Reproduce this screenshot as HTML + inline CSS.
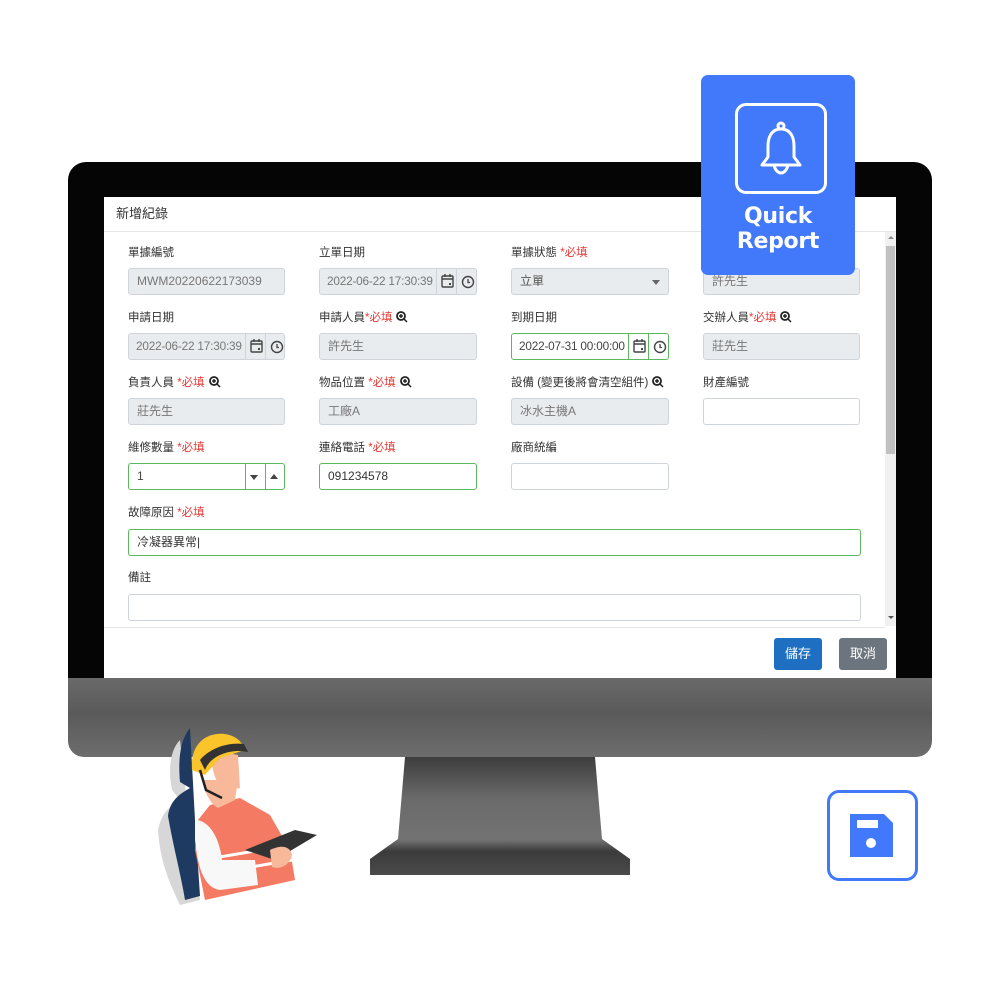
<!DOCTYPE html>
<html><head><meta charset="utf-8"><style>
*{box-sizing:border-box;margin:0;padding:0}
body{width:1000px;height:1000px;background:#fff;position:relative;overflow:hidden;font-family:"Liberation Sans","Noto Sans CJK TC",sans-serif;}
.a{position:absolute}
.lbl{position:absolute;font-size:11.5px;color:#333;white-space:nowrap;line-height:14px}
.req{color:#e53935}
.in{position:absolute;height:27px;border:1px solid #ced4da;border-radius:3px;background:#fff;font-size:12px;color:#444;padding-left:8px;line-height:25px;white-space:nowrap;overflow:hidden}
.sm{font-size:11.8px;padding-left:7px;letter-spacing:-0.2px}
.dis{background:#e9ecef;color:#777}
.ok{border-color:#5cb85c}
.addon{position:absolute;top:-1px;height:27px;width:21px;border-left:1px solid #ced4da}
.mag{display:inline-block;vertical-align:-2px;margin-left:4px}
</style></head><body>

<div class="a" style="left:68px;top:162px;width:864px;height:540px;background:#050505;border-radius:18px 18px 0 0"></div>
<div class="a" style="left:68px;top:678px;width:864px;height:79px;background:linear-gradient(#6a6a6a,#5a5a5a 45%,#6d6d6d);border-radius:0 0 16px 16px"></div>
<svg class="a" style="left:360px;top:757px" width="280" height="125">
<defs><linearGradient id="g" x1="0" y1="0" x2="0" y2="1"><stop offset="0" stop-color="#3d3d3d"/><stop offset=".35" stop-color="#6a6a6a"/><stop offset=".7" stop-color="#737373"/><stop offset=".8" stop-color="#3b3b3b"/><stop offset="1" stop-color="#4a4a4a"/></linearGradient></defs>
<path d="M45 0 H235 L242 82 L270 102 V118 H10 V102 L38 82 Z" fill="url(#g)"/>
</svg>

<div class="a" style="left:104px;top:197px;width:792px;height:481px;background:#fff"></div>
<div class="a" style="left:116px;top:203px;font-size:13px;color:#333">新增紀錄</div>
<div class="a" style="left:104px;top:231px;width:792px;height:1px;background:#e5e5e5"></div>
<div class="a" style="left:885px;top:232px;width:11px;height:394px;background:#f1f1f1"></div>
<div class="a" style="left:886px;top:246px;width:9px;height:208px;background:#c1c1c1"></div>
<div class="a" style="left:888px;top:236px;width:0;height:0;border:3px solid transparent;border-bottom-color:#888;border-top:0"></div>
<div class="a" style="left:888px;top:616px;width:0;height:0;border:3px solid transparent;border-top-color:#555;border-bottom:0"></div>
<div class="a" style="left:104px;top:627px;width:781px;height:1px;background:#e5e5e5"></div>

<div class="lbl" style="left:128px;top:246px">單據編號</div>
<div class="in dis" style="left:128px;top:268px;width:157px">MWM20220622173039</div>
<div class="lbl" style="left:319px;top:246px">立單日期</div>
<div class="in dis sm" style="left:319px;top:268px;width:158px">2022-06-22 17:30:39<div class="addon" style="left:116px"></div><div class="addon" style="left:136px"></div></div>
<div class="lbl" style="left:511px;top:246px">單據狀態 <span class="req">*必填</span></div>
<div class="in dis" style="left:511px;top:268px;width:158px;color:#555">立單<span class="a" style="right:8px;top:11px;border:4px solid transparent;border-top:5px solid #666;border-bottom:0"></span></div>
<div class="in dis" style="left:703px;top:268px;width:157px">許先生</div>

<div class="lbl" style="left:128px;top:311px">申請日期</div>
<div class="in dis sm" style="left:128px;top:333px;width:157px">2022-06-22 17:30:39<div class="addon" style="left:116px"></div><div class="addon" style="left:136px"></div></div>
<div class="lbl" style="left:319px;top:311px">申請人員<span class="req">*必填</span><svg class="mag" width="12" height="12"><circle cx="5" cy="5" r="4" fill="none" stroke="#222" stroke-width="1.8"/><path d="M8 8l3 3M3 5h4M5 3v4" stroke="#222" stroke-width="1.5"/></svg></div>
<div class="in dis" style="left:319px;top:333px;width:158px">許先生</div>
<div class="lbl" style="left:511px;top:311px">到期日期</div>
<div class="in ok sm" style="left:511px;top:333px;width:158px">2022-07-31 00:00:00<div class="addon" style="left:116px;border-color:#5cb85c"></div><div class="addon" style="left:136px;border-color:#5cb85c"></div></div>
<div class="lbl" style="left:703px;top:311px">交辦人員<span class="req">*必填</span><svg class="mag" width="12" height="12"><circle cx="5" cy="5" r="4" fill="none" stroke="#222" stroke-width="1.8"/><path d="M8 8l3 3M3 5h4M5 3v4" stroke="#222" stroke-width="1.5"/></svg></div>
<div class="in dis" style="left:703px;top:333px;width:157px">莊先生</div>

<div class="lbl" style="left:128px;top:376px">負責人員 <span class="req">*必填</span><svg class="mag" width="12" height="12"><circle cx="5" cy="5" r="4" fill="none" stroke="#222" stroke-width="1.8"/><path d="M8 8l3 3M3 5h4M5 3v4" stroke="#222" stroke-width="1.5"/></svg></div>
<div class="in dis" style="left:128px;top:398px;width:157px">莊先生</div>
<div class="lbl" style="left:319px;top:376px">物品位置 <span class="req">*必填</span><svg class="mag" width="12" height="12"><circle cx="5" cy="5" r="4" fill="none" stroke="#222" stroke-width="1.8"/><path d="M8 8l3 3M3 5h4M5 3v4" stroke="#222" stroke-width="1.5"/></svg></div>
<div class="in dis" style="left:319px;top:398px;width:158px">工廠A</div>
<div class="lbl" style="left:511px;top:376px">設備 (變更後將會清空組件)<svg class="mag" width="12" height="12"><circle cx="5" cy="5" r="4" fill="none" stroke="#222" stroke-width="1.8"/><path d="M8 8l3 3M3 5h4M5 3v4" stroke="#222" stroke-width="1.5"/></svg></div>
<div class="in dis" style="left:511px;top:398px;width:158px">冰水主機A</div>
<div class="lbl" style="left:703px;top:376px">財產編號</div>
<div class="in" style="left:703px;top:398px;width:157px"></div>

<div class="lbl" style="left:128px;top:441px">維修數量 <span class="req">*必填</span></div>
<div class="in ok" style="left:128px;top:463px;width:157px">1<div class="addon" style="left:116px;border-color:#5cb85c"></div><div class="addon" style="left:136px;border-color:#5cb85c"></div>
<span class="a" style="left:121px;top:11px;border:4px solid transparent;border-top:5px solid #444;border-bottom:0"></span>
<span class="a" style="left:141px;top:10px;border:4px solid transparent;border-bottom:5px solid #444;border-top:0"></span></div>
<div class="lbl" style="left:319px;top:441px">連絡電話 <span class="req">*必填</span></div>
<div class="in ok" style="left:319px;top:463px;width:158px;color:#333">091234578</div>
<div class="lbl" style="left:511px;top:441px">廠商統編</div>
<div class="in" style="left:511px;top:463px;width:158px"></div>

<div class="lbl" style="left:128px;top:506px">故障原因 <span class="req">*必填</span></div>
<div class="in ok" style="left:128px;top:529px;width:733px;color:#333">冷凝器異常|</div>
<div class="lbl" style="left:128px;top:571px">備註</div>
<div class="in" style="left:128px;top:594px;width:733px"></div>

<svg class="a" style="left:440px;top:274px" width="35" height="16"><rect x="2" y="2" width="11" height="11" rx="1" fill="none" stroke="#444" stroke-width="1.4"/><path d="M2 5h11M5 0v3M10 0v3" stroke="#444" stroke-width="1.4"/><rect x="9" y="9" width="2" height="2" fill="#444"/><circle cx="28" cy="8" r="5.5" fill="none" stroke="#444" stroke-width="1.4"/><path d="M28 5v3.5h2" stroke="#444" stroke-width="1.3" fill="none"/></svg>
<svg class="a" style="left:249px;top:339px" width="35" height="16"><rect x="2" y="2" width="11" height="11" rx="1" fill="none" stroke="#444" stroke-width="1.4"/><path d="M2 5h11M5 0v3M10 0v3" stroke="#444" stroke-width="1.4"/><rect x="9" y="9" width="2" height="2" fill="#444"/><circle cx="28" cy="8" r="5.5" fill="none" stroke="#444" stroke-width="1.4"/><path d="M28 5v3.5h2" stroke="#444" stroke-width="1.3" fill="none"/></svg>
<svg class="a" style="left:632px;top:339px" width="35" height="16"><rect x="2" y="2" width="11" height="11" rx="1" fill="none" stroke="#444" stroke-width="1.4"/><path d="M2 5h11M5 0v3M10 0v3" stroke="#444" stroke-width="1.4"/><rect x="9" y="9" width="2" height="2" fill="#444"/><circle cx="28" cy="8" r="5.5" fill="none" stroke="#444" stroke-width="1.4"/><path d="M28 5v3.5h2" stroke="#444" stroke-width="1.3" fill="none"/></svg>

<div class="a" style="left:774px;top:638px;width:48px;height:32px;background:#1e6fc2;border-radius:3px;color:#fff;font-size:13px;text-align:center;line-height:32px">儲存</div>
<div class="a" style="left:839px;top:638px;width:48px;height:32px;background:#6c757d;border-radius:3px;color:#fff;font-size:13px;text-align:center;line-height:32px">取消</div>

<div class="a" style="left:701px;top:75px;width:154px;height:200px;background:#4279fb;border-radius:7px"></div>
<div class="a" style="left:735px;top:103px;width:92px;height:91px;border:3.5px solid #fff;border-radius:11px"></div>
<svg class="a" style="left:753px;top:120px" width="56" height="60" viewBox="0 0 56 60">
<g fill="none" stroke="#fff" stroke-width="3" stroke-linejoin="round" stroke-linecap="round">
<circle cx="28" cy="6" r="3"/>
<path d="M28 9c-10 0-13 9-13 17v11l-6 8h38l-6-8V26c0-8-3-17-13-17z"/>
<path d="M21 45c1 5 4 8 7 8s6-3 7-8"/>
</g></svg>
<div class="a" style="left:701px;top:204px;width:154px;text-align:center;color:#fff;font-weight:bold;font-size:22px;line-height:25px;font-family:'DejaVu Sans','Liberation Sans',sans-serif;letter-spacing:-0.3px">Quick<br>Report</div>

<div class="a" style="left:827px;top:790px;width:91px;height:91px;border:3.5px solid #4279fb;border-radius:12px"></div>
<svg class="a" style="left:848px;top:812px" width="48" height="48"><path d="M2 2h34l9 9v34H2z" fill="#4279fb"/><rect x="9" y="8" width="21" height="8" fill="#fff"/><circle cx="23" cy="31" r="5" fill="#fff"/></svg>

<svg class="a" style="left:140px;top:720px" width="190" height="190">
<path d="M40 20 C30 30 28 50 32 70 L40 80 C30 86 22 92 18 110 C20 140 28 160 40 185 L60 180 L50 110 Z" fill="#d7d7d7"/>
<path d="M50 8 C40 20 38 40 40 62 L50 68 C40 74 30 80 28 96 C34 130 40 150 45 180 L60 176 L55 100 Z" fill="#1f3a60"/>
<path d="M70 85 L100 78 L130 95 L150 130 L155 160 L110 170 L65 180 L55 130 L58 100 Z" fill="#f47a64"/>
<path d="M62 140 L150 125 M64 155 L152 140" stroke="#fff" stroke-width="3"/>
<path d="M55 100 C70 100 80 120 82 140 L115 140 L118 165 L80 170 C65 168 58 150 55 120 Z" fill="#f8f8f8"/>
<path d="M62 60 C65 75 72 85 78 88 L95 80 L98 60 Z" fill="#f7b99a"/>
<path d="M72 30 C70 45 75 65 85 70 L100 68 L98 35 Z" fill="#f7b99a"/>
<path d="M52 50 C50 25 65 12 85 14 C98 16 103 24 105 30 L80 38 L65 55 Z" fill="#f9c52a"/>
<path d="M65 50 C70 36 90 28 108 32 L104 24 C88 22 70 28 60 40 Z" fill="#333"/>
<path d="M60 50 L66 70 L82 78" stroke="#222" stroke-width="2.5" fill="none"/>
<path d="M105 130 L155 110 L177 115 L135 140 Z" fill="#333"/>
<path d="M130 130 C140 125 150 125 152 135 C150 145 140 150 132 147 Z" fill="#f7b99a"/>
</svg>
</body></html>
